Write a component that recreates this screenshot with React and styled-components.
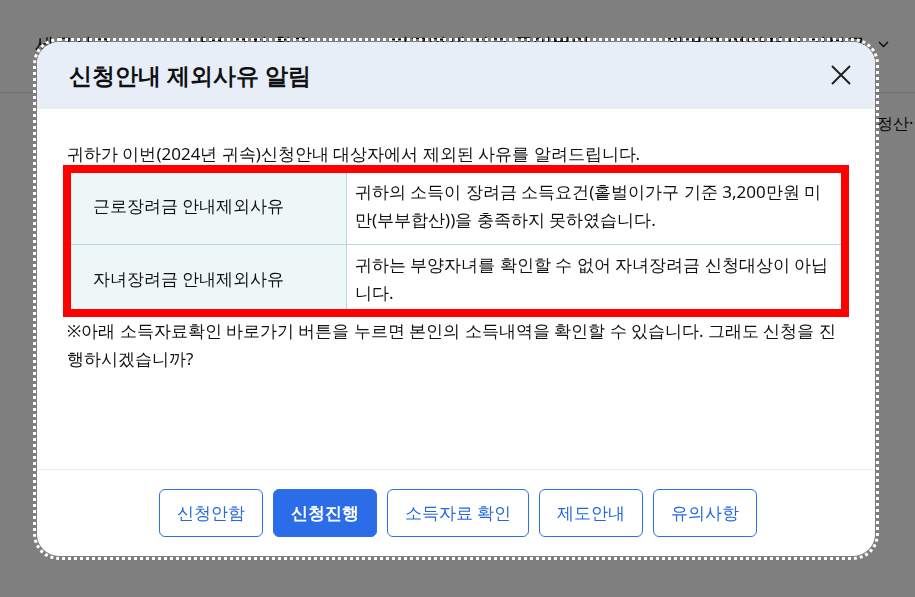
import React from 'react';
import styled, { createGlobalStyle } from 'styled-components';

const Global = createGlobalStyle`
  html, body { margin: 0; padding: 0; background: #fff; }
  body { font-family: "Noto Sans", sans-serif; }
  * { box-sizing: border-box; }
`;

const Page = styled.div`
  width: 915px;
  height: 597px;
  overflow: hidden;
  background: #fff;
`;

const NavBar = styled.nav`
  height: 93px;
  border-bottom: 1px solid #dcdcdc;
  display: flex;
  align-items: flex-start;
  gap: 52px;
  padding: 30px 0 0 35px;
`;

const NavItem = styled.div`
  width: ${p => p.$w}px;
  flex-shrink: 0;
  display: flex;
  align-items: center;
  justify-content: space-between;
  font-size: 18.5px;
  font-weight: 500;
  line-height: 28px;
  color: #111;
  white-space: nowrap;
`;

const SubRow = styled.div`
  padding: 19px 0 0 877px;
  font-size: 16px;
  line-height: 22px;
  color: #111;
  white-space: nowrap;
  overflow: hidden;
`;

const Overlay = styled.div`
  position: fixed;
  inset: 0;
  background: rgba(0, 0, 0, 0.5);
  display: flex;
  align-items: center;
  justify-content: center;
  padding-right: 3px;
`;

const Modal = styled.div`
  width: 838px;
  height: 514px;
  background: #fff;
  border-radius: 22px;
  overflow: hidden;
  outline: 3px dotted #fff;
  outline-offset: 1px;
  display: flex;
  flex-direction: column;
`;

const Header = styled.header`
  height: 67px;
  flex-shrink: 0;
  background: #e7eef8;
  display: flex;
  align-items: center;
  justify-content: space-between;
  padding: 0 24px 0 32px;
`;

const Title = styled.h2`
  margin: 0;
  font-size: 23px;
  font-weight: 600;
  color: #111;
  line-height: 34px;
`;

const CloseButton = styled.button`
  width: 20px;
  height: 20px;
  padding: 0;
  border: 0;
  background: transparent;
  display: flex;
  cursor: pointer;
`;

const Body = styled.div`
  flex: 1;
  padding: 31px 30px 0;
  font-size: 17px;
  line-height: 28px;
  color: #111;
`;

const Para = styled.p`
  margin: 0;
`;

const TableWrap = styled.div`
  position: relative;
  margin: 0 4px;
`;

const Table = styled.table`
  width: 100%;
  table-layout: fixed;
  border-spacing: 0;
  border-top: 1px solid #b8d8de;
  border-bottom: 1px solid #c9dfe3;
`;

const HeadCell = styled.th`
  width: 276px;
  background: #eef7f7;
  border-right: 1px solid #b8d8de;
  border-bottom: ${p => (p.$last ? '0' : '1px solid #b8d8de')};
  padding: ${p => p.$padT}px 22px ${p => p.$padB}px;
  text-align: left;
  font-weight: 400;
  color: #111;
  vertical-align: middle;
`;

const DataCell = styled.td`
  border-bottom: ${p => (p.$last ? '0' : '1px solid #b8d8de')};
  padding: ${p => p.$padT}px 8px ${p => p.$padB}px;
  color: #111;
  vertical-align: middle;
`;

const RedMark = styled.div`
  position: absolute;
  top: -3px;
  left: -8px;
  right: -8px;
  bottom: 0;
  border: 8px solid #ff0000;
  pointer-events: none;
`;

const Footer = styled.footer`
  flex-shrink: 0;
  border-top: 1px solid #ebebf2;
  padding: 19px 0 19px 4px;
  display: flex;
  justify-content: center;
  gap: 10px;
`;

const Button = styled.button`
  height: 48px;
  padding: 0 17px;
  border-radius: 6px;
  border: 1px solid #2d6fe8;
  background: ${p => (p.$primary ? '#2b6de8' : '#fff')};
  color: ${p => (p.$primary ? '#fff' : '#2467df')};
  font-family: inherit;
  font-size: 17px;
  font-weight: ${p => (p.$primary ? 700 : 500)};
  cursor: pointer;
`;

const Chevron = () => (
  <svg width="11" height="7" viewBox="0 0 11 7">
    <polyline points="1,1 5.5,5.5 10,1" fill="none" stroke="#111" strokeWidth="1.4" />
  </svg>
);

const navItems = [
  { label: '세금신고', w: 100 },
  { label: '납부·고지·환급', w: 151 },
  { label: '지급명세·자료·공익법인', w: 223 },
  { label: '장려금·연말정산·기부금', w: 224 },
];

const rows = [
  {
    head: '근로장려금 안내제외사유',
    text: '귀하의 소득이 장려금 소득요건(홑벌이가구 기준 3,200만원 미만(부부합산))을 충족하지 못하였습니다.',
    padT: 9,
    padB: 10,
  },
  {
    head: '자녀장려금 안내제외사유',
    text: '귀하는 부양자녀를 확인할 수 없어 자녀장려금 신청대상이 아닙니다.',
    padT: 6,
    padB: 9,
  },
];

const buttons = ['신청안함', '신청진행', '소득자료 확인', '제도안내', '유의사항'];

export default function App() {
  return (
    <>
      <Global />
      <Page>
        <NavBar>
          {navItems.map(n => (
            <NavItem key={n.label} $w={n.w}>
              {n.label}
              <Chevron />
            </NavItem>
          ))}
        </NavBar>
        <SubRow>정산·</SubRow>
      </Page>
      <Overlay>
        <Modal role="dialog">
          <Header>
            <Title>신청안내 제외사유 알림</Title>
            <CloseButton aria-label="닫기">
              <svg width="20" height="20" viewBox="0 0 20 20">
                <path d="M1 1 L19 19 M19 1 L1 19" stroke="#222" strokeWidth="2" fill="none" />
              </svg>
            </CloseButton>
          </Header>
          <Body>
            <Para>귀하가 이번(2024년 귀속)신청안내 대상자에서 제외된 사유를 알려드립니다.</Para>
            <TableWrap>
              <Table>
                <tbody>
                  {rows.map((r, i) => {
                    const last = i === rows.length - 1;
                    return (
                      <tr key={r.head}>
                        <HeadCell $last={last} $padT={r.padT} $padB={r.padB}>
                          {r.head}
                        </HeadCell>
                        <DataCell $last={last} $padT={r.padT} $padB={r.padB}>
                          {r.text}
                        </DataCell>
                      </tr>
                    );
                  })}
                </tbody>
              </Table>
              <RedMark />
            </TableWrap>
            <Para>※아래 소득자료확인 바로가기 버튼을 누르면 본인의 소득내역을 확인할 수 있습니다. 그래도 신청을 진행하시겠습니까?</Para>
          </Body>
          <Footer>
            {buttons.map(b => (
              <Button key={b} $primary={b === '신청진행'}>
                {b}
              </Button>
            ))}
          </Footer>
        </Modal>
      </Overlay>
    </>
  );
}
